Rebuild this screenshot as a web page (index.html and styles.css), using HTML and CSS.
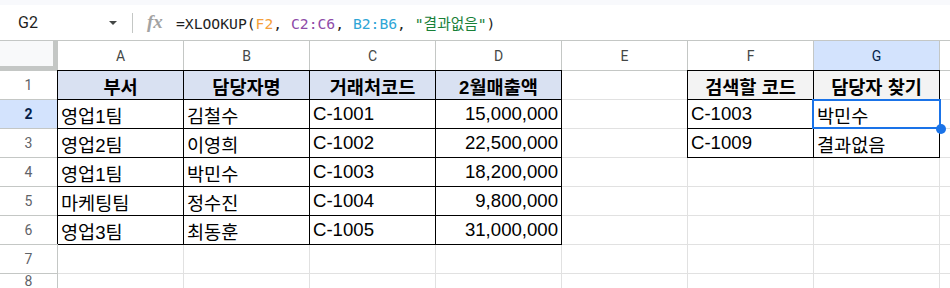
FILE: index.html
```html
<!DOCTYPE html>
<html lang="ko">
<head>
    <meta charset="UTF-8">
    <title>XLOOKUP</title>
    <link rel="stylesheet" href="styles.css">
</head>
<body>
    <div class="top-strip"></div>
    <div class="formula-bar">
        <div class="name-box">G2</div>
        <span class="caret"></span>
        <span class="divider"></span>
        <span class="fx">fx</span>
        <div class="formula">=XLOOKUP(<span class="ref-f">F2</span>, <span class="ref-c">C2:C6</span>, <span class="ref-b">B2:B6</span>, <span class="str">"결과없음"</span>)</div>
    </div>

    <div class="sheet">
        <!-- column headers -->
        <div class="corner"></div>
        <div class="col-head">A</div>
        <div class="col-head">B</div>
        <div class="col-head">C</div>
        <div class="col-head">D</div>
        <div class="col-head">E</div>
        <div class="col-head">F</div>
        <div class="col-head active">G</div>
        <div class="col-head"></div>

        <!-- row 1 -->
        <div class="row-head">1</div>
        <div class="cell boxed title">부서</div>
        <div class="cell boxed title">담당자명</div>
        <div class="cell boxed title">거래처코드</div>
        <div class="cell boxed title">2월매출액</div>
        <div class="cell"></div>
        <div class="cell boxed title gray">검색할 코드</div>
        <div class="cell boxed title gray">담당자 찾기</div>
        <div class="cell"></div>

        <!-- row 2 -->
        <div class="row-head active">2</div>
        <div class="cell boxed">영업1팀</div>
        <div class="cell boxed">김철수</div>
        <div class="cell boxed">C-1001</div>
        <div class="cell boxed num">15,000,000</div>
        <div class="cell"></div>
        <div class="cell boxed">C-1003</div>
        <div class="cell boxed selected">박민수</div>
        <div class="cell"></div>

        <!-- row 3 -->
        <div class="row-head">3</div>
        <div class="cell boxed">영업2팀</div>
        <div class="cell boxed">이영희</div>
        <div class="cell boxed">C-1002</div>
        <div class="cell boxed num">22,500,000</div>
        <div class="cell"></div>
        <div class="cell boxed">C-1009</div>
        <div class="cell boxed">결과없음</div>
        <div class="cell"></div>

        <!-- row 4 -->
        <div class="row-head">4</div>
        <div class="cell boxed">영업1팀</div>
        <div class="cell boxed">박민수</div>
        <div class="cell boxed">C-1003</div>
        <div class="cell boxed num">18,200,000</div>
        <div class="cell"></div>
        <div class="cell"></div>
        <div class="cell"></div>
        <div class="cell"></div>

        <!-- row 5 -->
        <div class="row-head">5</div>
        <div class="cell boxed">마케팅팀</div>
        <div class="cell boxed">정수진</div>
        <div class="cell boxed">C-1004</div>
        <div class="cell boxed num">9,800,000</div>
        <div class="cell"></div>
        <div class="cell"></div>
        <div class="cell"></div>
        <div class="cell"></div>

        <!-- row 6 -->
        <div class="row-head">6</div>
        <div class="cell boxed">영업3팀</div>
        <div class="cell boxed">최동훈</div>
        <div class="cell boxed">C-1005</div>
        <div class="cell boxed num">31,000,000</div>
        <div class="cell"></div>
        <div class="cell"></div>
        <div class="cell"></div>
        <div class="cell"></div>

        <!-- row 7 -->
        <div class="row-head">7</div>
        <div class="cell"></div>
        <div class="cell"></div>
        <div class="cell"></div>
        <div class="cell"></div>
        <div class="cell"></div>
        <div class="cell"></div>
        <div class="cell"></div>
        <div class="cell"></div>

        <!-- row 8, cut by the window -->
        <div class="row-head">8</div>
        <div class="cell"></div>
        <div class="cell"></div>
        <div class="cell"></div>
        <div class="cell"></div>
        <div class="cell"></div>
        <div class="cell"></div>
        <div class="cell"></div>
        <div class="cell"></div>
    </div>
</body>
</html>
```

FILE: styles.css
```css
html, body {
    margin: 0;
    height: 288px;
    overflow: hidden;
    background-color: #fff;
    font-family: Roboto, "Noto Sans CJK KR", sans-serif;
}
.top-strip {
    height: 5px;
    background-color: #f8f9fc;
}
.formula-bar {
    display: flex;
    align-items: center;
    height: 35px;
    border-bottom: 1px solid #c4c7c5;
}
.name-box {
    width: 91px;
    padding-left: 18px;
    font-size: 16px;
    color: #1f1f1f;
}
.caret {
    width: 0;
    height: 0;
    border-left: 4px solid transparent;
    border-right: 4px solid transparent;
    border-top: 4px solid #444746;
    margin-right: 15px;
}
.divider {
    width: 1px;
    height: 20px;
    background-color: #c4c7c5;
    margin-right: 14px;
}
.fx {
    font-family: "Liberation Serif", serif;
    font-style: italic;
    font-weight: bold;
    font-size: 19px;
    color: #a3a3a3;
    width: 29px;
    margin-top: -2px;
}
.formula {
    font-family: "DejaVu Sans Mono", "Noto Sans CJK KR", monospace;
    font-size: 14.7px;
    color: #1f1f1f;
    white-space: pre;
}
.ref-f { color: #f5a03a; }
.ref-c { color: #8e4ba8; }
.ref-b { color: #2fa6d6; }
.str { color: #188038; }

.sheet {
    display: grid;
    grid-template-columns: 57px repeat(7, 125px) 1fr;
    grid-template-rows: 29px repeat(7, 28px) 14px;
    gap: 1px;
    background-color: #e1e1e1;
}
.corner {
    background-color: #f8f9fa;
    border-right: 4px solid #c4c7c5;
    border-bottom: 4px solid #c4c7c5;
    box-sizing: border-box;
    box-shadow: 0 0 0 1px #c4c7c5;
}
.col-head, .row-head {
    display: flex;
    align-items: center;
    justify-content: center;
    background-color: #fff;
    box-shadow: 0 0 0 1px #c4c7c5;
    font-size: 14px;
}
.col-head {
    color: #444746;
}
.row-head {
    color: #5f6368;
}
.col-head.active, .row-head.active {
    background-color: #d3e3fd;
    color: #041e49;
}
.row-head.active {
    font-weight: bold;
}
.cell {
    display: flex;
    align-items: center;
    padding: 0 3px;
    background-color: #fff;
    font-family: "Liberation Sans", "Noto Sans CJK KR", sans-serif;
    font-size: 18.6px;
    color: #000;
    white-space: nowrap;
    overflow: hidden;
}
.cell.boxed {
    box-shadow: 0 0 0 1px #000;
    overflow: visible;
}
.cell.title {
    justify-content: center;
    font-weight: bold;
    background-color: #d9e1f2;
}
.cell.title.gray {
    background-color: #f3f3f3;
}
.cell.num {
    justify-content: flex-end;
}
.cell.selected {
    position: relative;
}
.cell.selected::after {
    content: "";
    position: absolute;
    top: -1px;
    bottom: -1px;
    left: -2px;
    right: -2px;
    border: 2px solid #1a73e8;
}
.cell.selected::before {
    content: "";
    position: absolute;
    right: -7px;
    bottom: -6px;
    width: 10px;
    height: 10px;
    border-radius: 50%;
    background-color: #1a73e8;
    z-index: 1;
}
```
